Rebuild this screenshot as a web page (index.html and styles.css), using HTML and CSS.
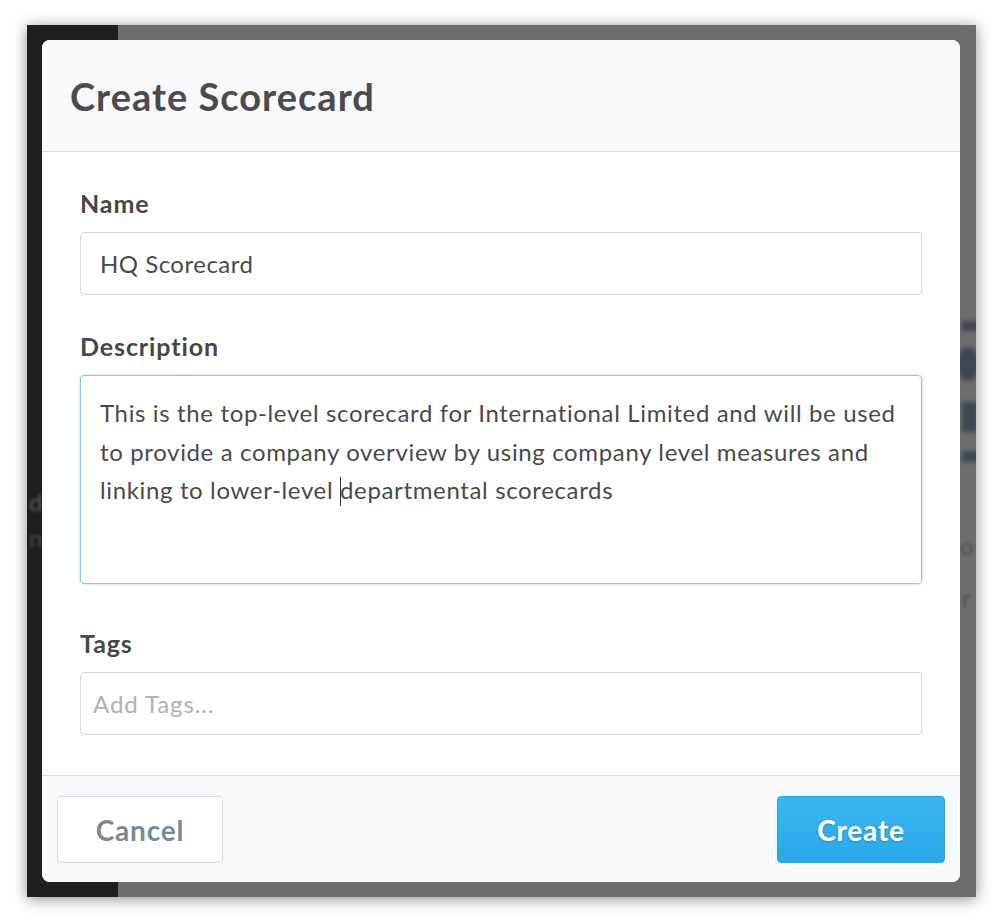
FILE: index.html
```html
<!DOCTYPE html>
<html lang="en">
<head>
<meta charset="utf-8">
<title>Create Scorecard</title>
<link rel="stylesheet" href="styles.css">
</head>
<body>
<div class="frame">
  <div class="backdrop">
    <div class="ghost ghost-bar1"></div>
    <div class="ghost ghost-circle"></div>
    <div class="ghost ghost-square"></div>
    <div class="ghost ghost-bar2"></div>
    <div class="ghost-text ghost-right1">o</div>
    <div class="ghost-text ghost-right2">r</div>
    <div class="ghost-text ghost-left1">d.</div>
    <div class="ghost-text ghost-left2">n</div>
  </div>
  <div class="modal">
    <div class="modal-header">
      <h1 class="modal-title">Create Scorecard</h1>
    </div>
    <div class="modal-body">
      <div class="field">
        <label class="field-label">Name</label>
        <div class="input">HQ Scorecard</div>
      </div>
      <div class="field field-description">
        <label class="field-label">Description</label>
        <div class="textarea">This is the top-level scorecard for International Limited and will be used<br>to provide a company overview by using company level measures and<br>linking to lower-level <span class="caret"></span>departmental scorecards</div>
      </div>
      <div class="field">
        <label class="field-label">Tags</label>
        <div class="input input-tags"><span class="placeholder">Add Tags...</span></div>
      </div>
    </div>
    <div class="modal-footer">
      <button class="btn btn-cancel">Cancel</button>
      <button class="btn btn-create">Create</button>
    </div>
  </div>
</div>
</body>
</html>
```
FILE: styles.css
```css
html, body {
  margin: 0;
  padding: 0;
  background: #ffffff;
}
body {
  width: 1000px;
  height: 920px;
  padding: 25px 0 0 27px;
  box-sizing: border-box;
  font-family: "Lato", "Liberation Sans", sans-serif;
}
.frame {
  position: relative;
  width: 949px;
  height: 872px;
  box-sizing: border-box;
  padding: 15px 16px 15px 15px;
  background: linear-gradient(to right, #1d1e20 0, #1d1e20 91px, #6c6e6e 91px, #6c6e6e 100%);
  box-shadow: 0 2px 14px rgba(0, 0, 0, 0.45);
}
.backdrop {
  position: absolute;
  inset: 0;
  overflow: hidden;
}
.ghost {
  position: absolute;
  background: #3e4852;
  filter: blur(2px);
}
.ghost-bar1 { left: 935px; top: 296px; width: 20px; height: 10px; }
.ghost-circle { left: 930px; top: 322px; width: 22px; height: 34px; border-radius: 50%; }
.ghost-square { left: 935px; top: 377px; width: 16px; height: 30px; }
.ghost-bar2 { left: 935px; top: 426px; width: 20px; height: 11px; }
.ghost-text {
  position: absolute;
  font-size: 24px;
  color: #4a4e52;
  filter: blur(1.5px);
}
.ghost-right1 { left: 933px; top: 506px; }
.ghost-right2 { left: 935px; top: 558px; }
.ghost-left1 { left: 2px; top: 462px; color: #5a5c60; }
.ghost-left2 { left: 2px; top: 498px; color: #4a4c50; }

.modal {
  position: relative;
  width: 918px;
  height: 842px;
  background: #ffffff;
  border-radius: 8px;
  display: flex;
  flex-direction: column;
  overflow: hidden;
}
.modal-header {
  height: 112px;
  box-sizing: border-box;
  background: #f8f9fb;
  border-bottom: 1px solid #d9dde2;
  padding: 0 28px;
  display: flex;
  align-items: center;
}
.modal-title {
  margin: 0;
  font-size: 38px;
  font-weight: 700;
  color: #4b4b4b;
  letter-spacing: 1px;
}
.modal-body {
  flex: 1;
  padding: 36px 38px 0 38px;
  display: flex;
  flex-direction: column;
  gap: 36px;
}
.field {
  display: flex;
  flex-direction: column;
  gap: 14px;
}
.field-description {
  margin-bottom: 8px;
}
.field-label {
  font-size: 25px;
  font-weight: 700;
  color: #474747;
  line-height: 30px;
  letter-spacing: 0.9px;
}
.input {
  height: 63px;
  box-sizing: border-box;
  border: 1px solid #d3d9df;
  border-radius: 4px;
  padding: 0 19px;
  display: flex;
  align-items: center;
  font-size: 24px;
  letter-spacing: 0.5px;
  color: #4a4a4a;
}
.input-tags {
  padding: 0 12px;
}
.placeholder {
  color: #a9b3bb;
  letter-spacing: 0.9px;
}
.textarea {
  height: 209px;
  box-sizing: border-box;
  border: 1px solid #8fc6e7;
  border-radius: 4px;
  box-shadow: 0 0 3px rgba(90, 170, 225, 0.5);
  padding: 18px 19px;
  font-size: 24px;
  letter-spacing: 0.64px;
  line-height: 38.5px;
  color: #4a4a4a;
}
.caret {
  display: inline-block;
  width: 1px;
  height: 29px;
  background: #333;
  vertical-align: -7px;
  margin-right: -1px;
}
.modal-footer {
  height: 107px;
  box-sizing: border-box;
  border-top: 1px solid #d9dde2;
  background: #f8f9fb;
  padding: 20px 15px 0 15px;
  display: flex;
  justify-content: space-between;
  align-items: flex-start;
}
.btn {
  height: 67px;
  border-radius: 4px;
  font-family: inherit;
  font-size: 28px;
  font-weight: 700;
  letter-spacing: 0.8px;
  cursor: pointer;
}
.btn-cancel {
  width: 166px;
  background: #ffffff;
  border: 1px solid #d3dbe1;
  color: #7a8a95;
}
.btn-create {
  width: 168px;
  background: linear-gradient(to bottom, #3ab6ef, #2aa7e7);
  border: 1px solid #2ba3e0;
  color: #ffffff;
  text-shadow: 0 1px 2px rgba(0, 0, 0, 0.2);
}
```
